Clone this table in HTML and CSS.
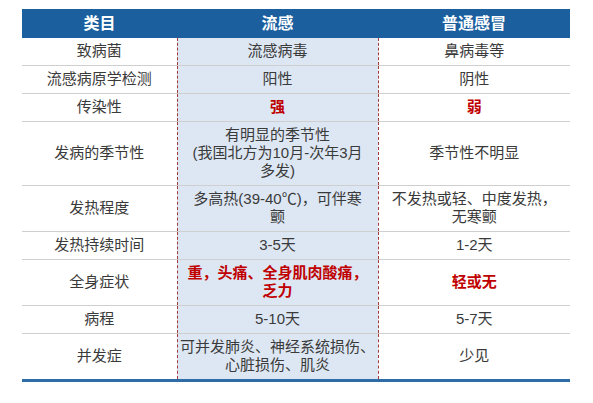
FILE: index.html
```html
<!DOCTYPE html>
<html lang="zh">
<head>
<meta charset="utf-8">
<link rel="stylesheet" href="styles.css">
</head>
<body>
<table class="cmp">
  <colgroup>
    <col class="c1"><col class="c2"><col class="c3">
  </colgroup>
  <thead>
    <tr><th>类目</th><th>流感</th><th>普通感冒</th></tr>
  </thead>
  <tbody>
    <tr><td>致病菌</td><td class="flu">流感病毒</td><td>鼻病毒等</td></tr>
    <tr><td>流感病原学检测</td><td class="flu">阳性</td><td>阴性</td></tr>
    <tr><td>传染性</td><td class="flu"><b class="hot">强</b></td><td><b class="hot">弱</b></td></tr>
    <tr><td>发病的季节性</td><td class="flu">有明显的季节性<br>(我国北方为10月-次年3月<br>多发)</td><td>季节性不明显</td></tr>
    <tr><td>发热程度</td><td class="flu">多高热(39-40℃)，可伴寒<br>颤</td><td>不发热或轻、中度发热，<br>无寒颤</td></tr>
    <tr><td>发热持续时间</td><td class="flu">3-5天</td><td>1-2天</td></tr>
    <tr><td>全身症状</td><td class="flu"><b class="hot">重，头痛、全身肌肉酸痛，<br>乏力</b></td><td><b class="hot">轻或无</b></td></tr>
    <tr><td>病程</td><td class="flu">5-10天</td><td>5-7天</td></tr>
    <tr><td>并发症</td><td class="flu">可并发肺炎、神经系统损伤、<br>心脏损伤、肌炎</td><td>少见</td></tr>
  </tbody>
</table>
</body>
</html>
```
FILE: styles.css
```css
html, body {
  margin: 0;
  padding: 0;
  background: #ffffff;
}
body {
  padding: 9px 0 0 22px;
  font-family: "Liberation Sans", "Noto Sans CJK SC", sans-serif;
  font-size: 15px;
  color: #3a3a3a;
}
.cmp {
  border-collapse: collapse;
  table-layout: fixed;
  width: 548px;
}
.c1 { width: 155px; }
.c2 { width: 201px; }
.c3 { width: 192px; }
.cmp th {
  background: #1b5f9f;
  color: #ffffff;
  font-size: 16px;
  font-weight: bold;
  line-height: 21px;
  padding: 4px 0;
  text-align: center;
}
.cmp td {
  text-align: center;
  vertical-align: middle;
  line-height: 18px;
  padding: 4px 1px 5px;
  border-bottom: 1px solid #cfcfcf;
  white-space: nowrap;
}
.cmp td.flu {
  background: #dde7f3;
  border-left: 1px dashed #a33a3a;
  border-right: 1px dashed #a33a3a;
}
.cmp tbody tr:last-child td {
  border-bottom: 3px solid #2d6ca6;
}
.hot {
  color: #c00000;
  font-weight: bold;
}
```
